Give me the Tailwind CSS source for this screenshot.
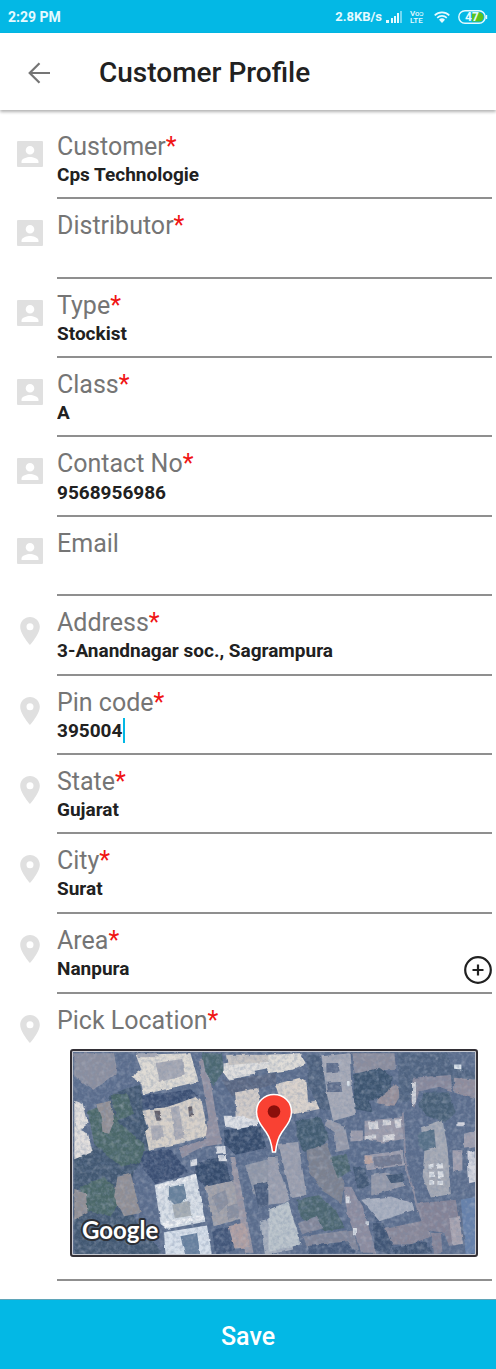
<!DOCTYPE html>
<html lang="en">
<head>
    <meta charset="UTF-8">
    <meta name="viewport" content="width=device-width, initial-scale=1.0">
    <title>Customer Profile</title>
    <script src="https://cdn.jsdelivr.net/npm/@tailwindcss/browser@4"></script>
</head>
<body class="bg-white font-['Roboto',sans-serif] text-[#212121] flex flex-col min-h-screen">
    <!-- icons shared by the rows -->
    <svg class="hidden">
        <symbol id="icon-person" viewBox="0 0 26 26">
            <path fill="currentColor" fill-rule="evenodd" d="M1 0h24a1 1 0 0 1 1 1v24a1 1 0 0 1-1 1H1a1 1 0 0 1-1-1V1a1 1 0 0 1 1-1zM13 5a4.300 4.300 0 1 0 0 8.600a4.300 4.300 0 0 0 0-8.600zM4.500 22h17v-1.500c0-3-5.500-4.600-8.500-4.600s-8.500 1.600-8.500 4.600z"/>
        </symbol>
        <symbol id="icon-pin" viewBox="5 2 14 20">
            <path fill="currentColor" d="M12 2C8.130 2 5 5.130 5 9c0 5.250 7 13 7 13s7-7.750 7-13c0-3.870-3.130-7-7-7zm0 9.500a2.500 2.500 0 1 1 0-5 2.500 2.500 0 0 1 0 5z"/>
        </symbol>
    </svg>

    <div class="h-[33px] px-2 bg-[#03b8e5] text-[#e6faff] flex items-center justify-between text-[13px] font-bold">
        <span class="text-sm">2:29 PM</span>
        <div class="flex items-center">
            <span>2.8KB/s</span>
            <svg class="w-4 h-3 ml-1" viewBox="0 0 16 12" fill="currentColor">
                <path d="M0 9h3v3H0zM5 7h2v5H5zM8 5h2v7H8zM11 2h2v10h-2z"/>
                <path opacity=".5" d="M14 0h2v12h-2z"/>
            </svg>
            <span class="ml-2 text-[8px] leading-[7px] w-4 font-medium">Vo&#596;<br>LTE</span>
            <svg class="w-4 h-3 ml-2" viewBox="0 0 16 12" fill="none" stroke="currentColor" stroke-width="1.600">
                <path d="M.7 4.300a10.500 10.500 0 0 1 14.600 0M3.200 6.800a7 7 0 0 1 9.600 0"/>
                <path fill="currentColor" stroke="none" d="M5 8.800a4.300 4.300 0 0 1 6 0l-3 3.200z"/>
            </svg>
            <svg class="w-[30px] h-[14px] ml-2" viewBox="0 0 30 14">
                <rect x=".8" y=".8" width="26.400" height="12.400" rx="6.200" fill="none" stroke="#e6faff" stroke-width="1.400"/>
                <path d="M14 2.500h7a4.500 4.500 0 0 1 0 9h-7z" fill="#5cc31d"/>
                <path d="M28.500 5v4" stroke="#e6faff" stroke-width="1.400"/>
                <text x="14" y="11" text-anchor="middle" font-family="Roboto" font-size="12" font-weight="700" fill="#e6faff">47</text>
            </svg>
        </div>
    </div>

    <header class="relative h-[77px] pl-7 pt-[2px] flex items-center gap-[49px] bg-white shadow-[0_2px_3px_rgba(0,0,0,0.3)]">
        <button type="button" aria-label="Back" class="text-[#757575]">
            <svg class="w-[22px] h-[22px]" viewBox="0 0 22 22" fill="none" stroke="currentColor" stroke-width="2.200">
                <path d="M22 11H2M11.500 1.200L1.700 11l9.800 9.800"/>
            </svg>
        </button>
        <h1 class="text-[28px] font-medium">Customer Profile</h1>
    </header>

    <form id="profileForm" class="flex-1 flex flex-col pt-[10px] pl-[17px] pr-1 pb-[18px]">
        <div id="fields" class="flex-1 flex flex-col"></div>

        <div class="flex gap-[14px]">
            <div class="w-[26px] shrink-0 flex justify-center items-start pt-[21px] text-[#e0e0e0]">
                <svg class="w-5 h-7"><use href="#icon-pin"/></svg>
            </div>
            <div class="flex-1 h-[287px] border-b-2 border-[#8f8f8f] pt-3">
                <div class="text-[25px] leading-[30px] text-[#757575]">Pick Location<span class="text-[#f01414]">*</span></div>
                <div class="relative ml-[13px] mr-[14px] mt-[13px] h-[208px] rounded-[3px] border-2 border-[#333036] bg-[#c9cbd2] p-px overflow-hidden">
                    <svg class="w-full h-full" viewBox="0 0 1212 612" preserveAspectRatio="none">
                        <defs>
                            <filter id="soft" x="0" y="0" width="100%" height="100%">
                                <feTurbulence type="fractalNoise" baseFrequency=".04" numOctaves="3" seed="4" result="n"/>
                                <feDisplacementMap in="SourceGraphic" in2="n" scale="9" xChannelSelector="R" yChannelSelector="G"/>
                                <feGaussianBlur stdDeviation="1"/>
                            </filter>
                            <filter id="grain" x="0" y="0" width="100%" height="100%">
                                <feTurbulence type="fractalNoise" baseFrequency=".09" numOctaves="3" seed="7"/>
                                <feColorMatrix values="0 0 0 0 .2  0 0 0 0 .27  0 0 0 0 .4  2 2 0 0 -1.700"/>
                            </filter>
                            <filter id="light" x="0" y="0" width="100%" height="100%">
                                <feTurbulence type="fractalNoise" baseFrequency=".07" numOctaves="2" seed="21"/>
                                <feColorMatrix values="0 0 0 0 .65  0 0 0 0 .66  0 0 0 0 .72  1.500 1.500 0 0 -1.400"/>
                            </filter>
                        </defs>
                        <rect width="1212" height="612" fill="#5a6c8c"/>
                        <g filter="url(#soft)">
                            <rect width="1212" height="612" fill="#5a6c8c"/>
                            <!-- west half -->
                            <g transform="translate(-36 -32)">
                                <path fill="#435972" d="M40 350l60-30 50-160 90-30 30 200-50 60-20 100 40 80 60 60v60H40z"/>
                                <path fill="#4b6769" d="M80 210l60-20 40 60 70 60 10 50-80 20-80-70zM60 440l70-30 60 60-40 60-90-20zM150 160l50 0 20 60-50 20z"/>
                                <path fill="#8c8f9f" d="M40 36h120l10 60-70 50-60-40z"/>
                                <path fill="#928f94" d="M105 190l45-10 10 60-15 40-20-5-5-45zM170 410l40-10 30 120-50 10-30-60zM40 450l35 10 5 60-40 20z"/>
                                <path fill="#e4e0de" d="M40 180l25 10 15 60-20 15 20 10 15 60-25 10-30 12z"/>
                                <path fill="#e0dcd5" d="M225 40l165-4 25 85-165 40-8-35-30-20 30-20z"/>
                                <path fill="#a6a8b3" d="M285 65l80-12 8 50-75 20zM230 36h60v12h-60z"/>
                                <path fill="#d8d1c9" d="M245 210l80-15 35-20 35-15 30 25 20 100-90 25-90 18-12-55 10-15z"/>
                                <path fill="#acacb5" d="M330 200l25-5 15 95-25 10zM270 255l35 0 5 35-35 10z"/>
                                <path fill="#63606b" d="M280 210l15 0 5 30-12 0zM383 198l12-2 3 30-12 2z"/>
                                <path fill="#3b4f73" d="M245 165l150-20 15 20-50 20-45 15-70 5zM250 335l80-8 55 70-100 35-50-60z"/>
                                <path fill="#9390a0" d="M415 60l25-10 25 160 20 100-60 10-60 30-10-25 80-30 10-60z"/>
                                <path fill="#4b6872" d="M425 36h60l5 50-30 50-25-45z"/>
                                <path fill="#e3e1df" d="M490 70l155-28v35l-60 12-5 12-75 15-15-20z"/>
                                <path fill="#c8c4c2" d="M500 40h145v20l-140 12z"/>
                                <path fill="#596580" d="M485 120l160-25v35l-130 35z"/>
                                <path fill="#d3ccc8" d="M525 155l70-15 15 95-50 20-30-20z"/>
                                <path fill="#dfe1e6" d="M490 225l45 0 60 15-5 15-60 10-35-8z"/>
                                <path fill="#364b6c" d="M490 268l110-10 20 65-95 20-30-30zM405 370l90-25 15 80-75 15-30-30z"/>
                                <path fill="#dadde4" d="M465 318l30-2 2 22-30 2zM475 345l25-2 0 20-25 0zM390 360l20-5 0 20-20 4z"/>
                                <path fill="#d9e0e8" d="M282 435l125-34 28 145-115 22-20-15z"/>
                                <path fill="#66809b" d="M325 442l45-10 10 45-35 20-20-20z"/>
                                <path fill="#a6adb3" d="M335 495l50-12 8 45-50 8z"/>
                                <path fill="#f0f2f5" d="M285 438l122-34 2 10-115 32zM305 550l125-25 4 14-119 24z"/>
                                <path fill="#d8e1ec" d="M310 578l130-20 15 90H315z"/>
                                <path fill="#657f9e" d="M360 590l50-10 10 68h-45z"/>
                                <path fill="#a3a2a9" d="M435 440l90-20 25 115-90 25z"/>
                                <path fill="#8a8f9f" d="M455 470l40-20 10 40-30 30zM500 500l35-10 5 40-40 8z"/>
                                <path fill="#9b97a4" d="M510 350l15 0 55 290h-25z"/>
                                <path fill="#b09fa2" d="M505 560l50-12 15 75-50 5z"/>
                                <path fill="#425779" d="M455 570l50-8 20 70-60 15z"/>
                                <path fill="#9298a8" d="M555 375l95-25 20 90-85 30z"/>
                                <path fill="#485c7b" d="M580 435l85-25 5 75-75 20z"/>
                                <path fill="#a7afbd" d="M600 545l80-25 20 110-85 18z"/>
                            </g>
                            <!-- east half -->
                            <g transform="translate(594 -32)">
                                <path fill="#e0ddd8" d="M-5 40l95-4 18 30-40 20-73 10z"/>
                                <path fill="#dbd3cc" d="M15 130l75-20 20 10 5 65 35-10 0 30-80 15-30-20z"/>
                                <path fill="#4b5f7c" d="M110 40l40 0 45 170-45-5-35-70z"/>
                                <path fill="#a6a9b6" d="M155 45l85-9 5 90 15 95-70 20-20-90z"/>
                                <path fill="#5d6c8a" d="M170 65l35 0 5 25-40 5zM170 125l40-2 5 30-40 0z"/>
                                <path fill="#8c8d9d" d="M245 36h130l5 50-125 10z"/>
                                <path fill="#3d5470" d="M250 100l80-20 40 30-10 60-60 10 10 35-55-10z"/>
                                <path fill="#978f99" d="M325 175l55-45 15 30-20 35-55-8z"/>
                                <path fill="#4f6380" d="M385 36h150l10 30 75 30v30h-70l-10-20-90 0-10 70-50 10z"/>
                                <path fill="#88889b" d="M430 110l115-8 5 50-40-15-60 15-15 50-10-10z"/>
                                <path fill="#d3d5db" d="M428 125l12-2 0 60-12 15z"/>
                                <path fill="#465e76" d="M460 155l80 0 20 60-30 30-60-20-20-30z"/>
                                <path fill="#918d9c" d="M555 110l65 5v60l-65-20z"/>
                                <path fill="#435b71" d="M80 240l70-10 30 60-30 35-50 10-20-50z"/>
                                <path fill="#979aa9" d="M170 235l55 20 15 70-40 10-5-60-30-20z"/>
                                <path fill="#9d9cab" d="M285 240l115-10 5 65-60 12-60-10zM245 270l35 0 0 30-35 3zM285 345l115-15 5 45-110 15z"/>
                                <path fill="#d8d8dc" d="M295 243l30-2 2 24-28 2zM340 238l25 0 0 15-25 2zM375 237l22-2 3 25-22 3zM290 285l30 0v12h-30zM340 285l35-5v18l-35 3z"/>
                                <path fill="#727990" d="M310 350l85-8 0 30-80 10z"/>
                                <path fill="#bfa6a1" d="M285 346h22v25h-22z"/>
                                <path fill="#9599a9" d="M305 405l45-8 50 15 5 25-100 30z"/>
                                <path fill="#435975" d="M350 405l50-5 5 25-40 5zM250 380l40 5 10 50-35 15z"/>
                                <path fill="#9c9fae" d="M25 310l60-5 25 160-45 10zM-5 350l20 0 45 130-20 10-45 5z"/>
                                <path fill="#7c818f" d="M110 330l60-20 20 50 35 70-10 60-60-40-40-60z"/>
                                <path fill="#4b6670" d="M180 350l50-10 15 50-40 25zM80 480l70-15 50 50 25 50-60 10-75-40z"/>
                                <path fill="#bcc5cc" d="M-5 510l60-25 40 130-100 22z"/>
                                <path fill="#8d8c9f" d="M220 440l25 0 35 60 40 140h-45l-40-110z"/>
                                <path fill="#828699" d="M85 550l55-20 20 35-65 20zM100 590l150-20 15 60-150 5z"/>
                                <path fill="#455a7c" d="M115 620l120-15 25 35-150 5zM310 500l60 30-50 20z"/>
                                <path fill="#dde0e6" d="M228 470h12v20h-12zM250 565h12v22h-12zM288 545h10v12h-10zM312 480l55-8 3 20-35 8 0 22-18 0z"/>
                                <path fill="#a8afbf" d="M275 480l90-10 65 20 5 20-105 35z"/>
                                <path fill="#898798" d="M335 570l140-30 10 50-60 25-90 0z"/>
                                <path fill="#405574" d="M310 550l30 0 30 70-10 28-45-20zM370 625l100-20 20 35-110 8z"/>
                                <path fill="#a5a9b4" d="M455 260l65-22 15 80 10 145-60 10-25-60 5-80z"/>
                                <path fill="#576f87" d="M450 275l45-8 5 55-35 10-20-20z"/>
                                <path fill="#e2e5e9" d="M478 372l15-2 0 14-15 2zM502 370l18-2 2 16-18 2zM480 395l15 0 0 15-15 2zM505 393l17 0 2 18-17 2zM480 420l15 0 0 14-15 0zM505 422l17 0 0 12-17 2z"/>
                                <path fill="#858396" d="M440 490l120-10 20 130-40 10-15-40-60-10zM485 580l30 0 5 60-25 5z"/>
                                <path fill="#a8a3af" d="M540 535l30-2 12 80-32 5z"/>
                                <path fill="#6681ab" d="M575 480l45-10v175h-30z"/>
                                <path fill="#a19fae" d="M550 330l30 0 0 60-28 5zM585 280l35-10v50l-35 5z"/>
                                <path fill="#d5d6df" d="M595 335l25-5v95l-20 5zM562 245h25v12h-25z"/>
                                <path fill="#dce4ec" d="M555 70l22 0 0 15-22-2zM232 120h8v16h-8z"/>
                                <path fill="none" stroke="#8b8b9e" stroke-width="6" d="M400 215l10 170 30 90 20 70"/>
                            </g>
                        </g>
                        <rect width="1212" height="612" filter="url(#grain)" opacity=".35"/>
                        <rect width="1212" height="612" filter="url(#light)" opacity=".3"/>
                    </svg>
                    <svg class="absolute left-1/2 top-[42px] -ml-[19px] w-[38px] h-[61px]" viewBox="0 0 38 61">
                        <path fill="#f94133" stroke="#fff" stroke-width="1.500" d="M19 1.500C9 1.500 1.500 9 1.500 18.800c0 8.200 4.500 13.200 9.500 20.200 4 5.800 5.600 11 6.500 20h3c.9-9 2.500-14.200 6.500-20 5-7 9.500-12 9.500-20.200C36.500 9 29 1.500 19 1.500z"/>
                        <circle cx="19" cy="18.500" r="6.300" fill="#8b0f0b"/>
                    </svg>
                    <svg class="absolute left-1 bottom-1 w-24 h-9" viewBox="0 0 96 36">
                        <text x="6" y="24" font-family="Lato" font-size="24" font-weight="700" fill="#fff" stroke="#2b2f36" stroke-width="4" stroke-linejoin="round" paint-order="stroke">Google</text>
                    </svg>
                </div>
            </div>
        </div>
    </form>

    <button type="submit" form="profileForm" class="h-[70px] pt-1 border-t border-[#5fa5b8] bg-[#03b8e5] text-white text-[25px] font-medium">Save</button>

    <script>
        const fields = [
            { id: "customer", label: "Customer", value: "Cps Technologie", icon: "person", required: true },
            { id: "distributor", label: "Distributor", value: "", icon: "person", required: true },
            { id: "type", label: "Type", value: "Stockist", icon: "person", required: true },
            { id: "class", label: "Class", value: "A", icon: "person", required: true },
            { id: "contact", label: "Contact No", value: "9568956986", icon: "person", required: true },
            { id: "email", label: "Email", value: "", icon: "person", required: false },
            { id: "address", label: "Address", value: "3-Anandnagar soc., Sagrampura", icon: "pin", required: true },
            { id: "pincode", label: "Pin code", value: "395004", icon: "pin", required: true, caret: true },
            { id: "state", label: "State", value: "Gujarat", icon: "pin", required: true },
            { id: "city", label: "City", value: "Surat", icon: "pin", required: true },
            { id: "area", label: "Area", value: "Nanpura", icon: "pin", required: true, add: true }
        ];

        const iconSize = { person: "w-[26px] h-[26px]", pin: "w-5 h-7" };
        const star = `<span class="text-[#f01414]">*</span>`;
        const caret = `<span class="absolute left-[66px] top-0 w-[2px] h-[25px] bg-[#03b8e5]"></span>`;
        const addButton = `
            <button type="button" aria-label="Add area" class="shrink-0">
                <svg class="w-7 h-7" viewBox="0 0 28 28" fill="none" stroke="#212121" stroke-width="2.200">
                    <circle cx="14" cy="14" r="12.800"/>
                    <path d="M14 8.500v11M8.500 14h11"/>
                </svg>
            </button>`;

        document.getElementById("fields").innerHTML = fields.map(f => `
            <div class="flex-auto flex gap-[14px]">
                <div class="w-[26px] shrink-0 flex justify-center items-start pt-[21px] text-[#e0e0e0]">
                    <svg class="${iconSize[f.icon]}"><use href="#icon-${f.icon}"/></svg>
                </div>
                <div class="flex-1 border-b-2 border-[#8f8f8f] pt-3 pb-2">
                    <label for="${f.id}" class="block text-[25px] leading-[30px] text-[#757575]">${f.label}${f.required ? star : ""}</label>
                    <div class="relative flex items-center">
                        <input type="text" id="${f.id}" value="${f.value}" class="flex-1 min-w-0 h-[27px] text-[19px] font-bold outline-none">
                        ${f.caret ? caret : ""}${f.add ? addButton : ""}
                    </div>
                </div>
            </div>`).join("");
    </script>
</body>
</html>
